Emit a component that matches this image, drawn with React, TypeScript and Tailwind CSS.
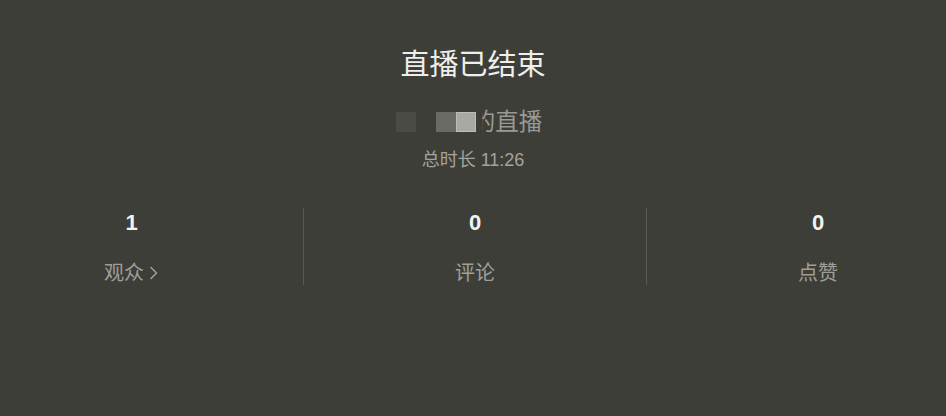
import React from "react";

const font = { fontFamily: '"Liberation Sans", "Noto Sans CJK SC", sans-serif' };

function Stat({ value, label, chevron, divider }: { value: string; label: string; chevron?: boolean; divider?: boolean }) {
  return (
    <div className={`w-[343px] h-[77px] flex flex-col items-center ${divider ? "border-l border-[#585953]" : ""}`}>
      <div className="text-[22px] leading-[26px] mt-[2px] font-semibold text-[#f2f2f0]">{value}</div>
      <div className="mt-[24px] flex items-center text-[20px] leading-[26px] text-[#9f9f9a]">
        <span>{label}</span>
        {chevron && (
          <svg width="10" height="16" viewBox="0 0 10 16" className="ml-[5px]">
            <path d="M2 2.5 L7.5 8 L2 13.5" fill="none" stroke="#9f9f9a" strokeWidth="1.6" strokeLinecap="round" strokeLinejoin="round" />
          </svg>
        )}
      </div>
    </div>
  );
}

export default function App() {
  return (
    <div className="w-[946px] h-[416px] bg-[#3d3e38] overflow-hidden flex flex-col items-center" style={font}>
      <h1 className="mt-[46px] text-[29px] leading-[38px] text-[#eeeeec]">直播已结束</h1>
      <div className="mt-[24px] flex items-center ml-[-8px]">
        <div className="w-[20px] h-[20px] bg-[#4a4b45]" />
        <div className="w-[20px] h-[20px] bg-[#6a6b65] ml-[20px]" />
        <div className="relative z-10 w-[26px] h-[28px] bg-[#3d3e38] flex items-center">
          <div className="w-[20px] h-[20px] bg-[#a8a9a4] border border-[#bdbdb8]" />
        </div>
        <span className="ml-[-10px] text-[23.5px] leading-[28px] text-[#999995]">的直播</span>
      </div>
      <div className="mt-[12px] text-[18px] leading-[24px] text-[#a3a39e]">总时长 11:26</div>
      <div className="mt-[36px] self-start ml-[-40px] flex">
        <Stat value="1" label="观众" chevron />
        <Stat value="0" label="评论" divider />
        <Stat value="0" label="点赞" divider />
      </div>
    </div>
  );
}
